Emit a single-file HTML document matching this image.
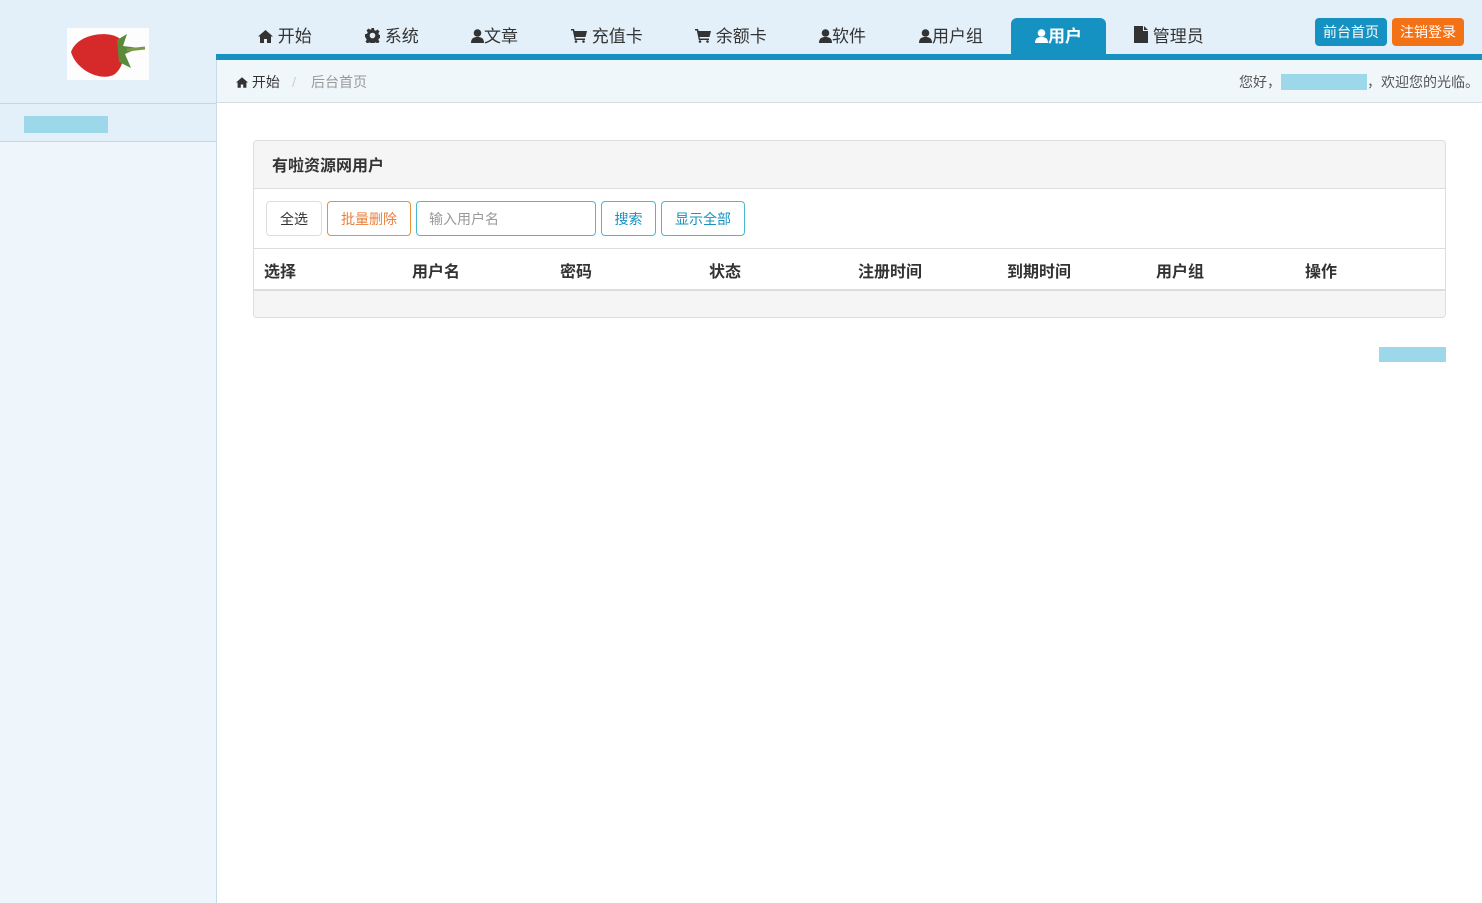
<!DOCTYPE html>
<html><head><meta charset="utf-8"><style>
*{margin:0;padding:0;box-sizing:border-box}
body{width:1482px;height:903px;background:#fff;font-family:"Liberation Sans","Noto Sans CJK SC",sans-serif;position:relative;overflow:hidden;color:#333}
.top{position:absolute;left:0;top:0;width:1482px;height:60px;background:#e3f0fa}
.side{position:absolute;left:0;top:60px;width:217px;height:843px;background:#eef6fb;border-right:1px solid #c9dbe6}
.sidehead{position:absolute;left:0;top:60px;width:216px;height:43px;background:#e3f0fa}
.sideitem{position:absolute;left:0;top:103px;width:216px;height:39px;background:#e3f0fa;border-top:1px solid #c5d6e0;border-bottom:1px solid #c5d6e0}
.blk{position:absolute;background:#9dd8ea}
.bar{position:absolute;left:216px;top:54px;width:1266px;height:6px;background:#1592c2}
.crumb{position:absolute;left:217px;top:60px;width:1265px;height:43px;background:#f0f7fb;border-bottom:1px solid #d3dde3;font-size:14px;line-height:43px}
.nav{position:absolute;top:18px;height:36px;line-height:38px;font-size:17px;color:#333;white-space:nowrap}
.act{background:#1592c2;color:#fff;border-radius:6px 6px 0 0;font-weight:bold;text-align:center}
.btn{position:absolute;top:18px;height:28px;width:72px;border-radius:4px;color:#fff;font-size:14px;line-height:28px;text-align:center}
.panel{position:absolute;left:253px;top:140px;width:1193px;height:178px;border:1px solid #ddd;border-radius:4px;overflow:hidden}
.ph{height:48px;background:#f5f5f5;border-bottom:1px solid #ddd;font-weight:bold;font-size:16px;line-height:52px;padding-left:18px}
.b{position:absolute;top:60px;height:35px;border:1px solid;border-radius:4px;font-size:14px;line-height:35px;text-align:center}
.th{position:absolute;top:107px;left:0;width:100%;height:43px;border-top:1px solid #ddd;border-bottom:2px solid #ddd;font-weight:bold;font-size:16px}
.th span{position:absolute;top:10px}
.empty{position:absolute;top:150px;left:0;width:100%;height:27px;background:#f5f5f5}
svg.i{vertical-align:-1px;fill:currentColor}
</style></head><body>
<div class="top"></div>
<div class="side"></div>
<div class="sidehead"></div>
<div class="sideitem"><div class="blk" style="left:24px;top:12px;width:84px;height:17px"></div></div>
<svg style="position:absolute;left:67px;top:28px" width="82" height="52" viewBox="0 0 82 52"><rect width="82" height="52" fill="#fdfdfd"/><path d="M4 24 C10 6 40 2 52 10 C60 18 58 38 48 46 C36 54 10 44 4 24Z" fill="#d62a2a"/><path d="M50 12 L60 6 L56 18 L72 20 L58 26 L64 40 L52 34Z" fill="#5a8a3a"/><path d="M60 22 L78 20" stroke="#7a9a4a" stroke-width="3"/></svg>
<div class="bar"></div>
<div class="nav" style="left:258px"><svg class="i" width="15" height="13" viewBox="0 0 15 13"><path d="M7.5 0 L15 6.5 L13 6.5 L13 13 L9 13 L9 9 L6 9 L6 13 L2 13 L2 6.5 L0 6.5Z"/></svg> 开始</div>
<div class="nav" style="left:365px"><svg class="i" width="15" height="15" viewBox="0 0 16 16"><path d="M6.5 0h3l.4 2.2 1.6.7 1.9-1.3 2.1 2.1-1.3 1.9.7 1.6 2.1.4v3l-2.1.4-.7 1.6 1.3 1.9-2.1 2.1-1.9-1.3-1.6.7-.4 2.1h-3l-.4-2.1-1.6-.7-1.9 1.3-2.1-2.1 1.3-1.9-.7-1.6L0 9.5v-3l2.2-.4.7-1.6-1.3-1.9 2.1-2.1 1.9 1.3 1.6-.7zM8 5a3 3 0 100 6 3 3 0 000-6z" fill-rule="evenodd"/></svg> 系统</div>
<div class="nav" style="left:471px"><svg class="i" width="13" height="14" viewBox="0 0 13 14"><circle cx="6.5" cy="4" r="3.8"/><path d="M0 14 C0 9 3 8 6.5 8 C10 8 13 9 13 14Z"/></svg>文章</div>
<div class="nav" style="left:571px"><svg class="i" width="16" height="14" viewBox="0 0 16 14"><path d="M0 0h3l.6 2H16l-1.5 6H4.5l.4 1.5H14V11H3.8L1.8 1.5H0z"/><circle cx="5" cy="12.5" r="1.3"/><circle cx="12.5" cy="12.5" r="1.3"/></svg> 充值卡</div>
<div class="nav" style="left:695px"><svg class="i" width="16" height="14" viewBox="0 0 16 14"><path d="M0 0h3l.6 2H16l-1.5 6H4.5l.4 1.5H14V11H3.8L1.8 1.5H0z"/><circle cx="5" cy="12.5" r="1.3"/><circle cx="12.5" cy="12.5" r="1.3"/></svg> 余额卡</div>
<div class="nav" style="left:819px"><svg class="i" width="13" height="14" viewBox="0 0 13 14"><circle cx="6.5" cy="4" r="3.8"/><path d="M0 14 C0 9 3 8 6.5 8 C10 8 13 9 13 14Z"/></svg>软件</div>
<div class="nav" style="left:919px"><svg class="i" width="13" height="14" viewBox="0 0 13 14"><circle cx="6.5" cy="4" r="3.8"/><path d="M0 14 C0 9 3 8 6.5 8 C10 8 13 9 13 14Z"/></svg>用户组</div>
<div class="nav act" style="left:1011px;width:95px"><svg class="i" width="13" height="14" viewBox="0 0 13 14"><circle cx="6.5" cy="4" r="3.8"/><path d="M0 14 C0 9 3 8 6.5 8 C10 8 13 9 13 14Z"/></svg>用户</div>
<div class="nav" style="left:1134px"><svg class="i" width="14" height="17" viewBox="0 0 14 17"><path d="M0 0h9v5h5v12H0z"/><path d="M10 0l4 4h-4z"/></svg> 管理员</div>
<div class="btn" style="left:1315px;background:#1592c2">前台首页</div>
<div class="btn" style="left:1392px;background:#f47216">注销登录</div>
<div class="crumb"><span style="position:absolute;left:19px;top:1px;color:#333;font-size:14px"><svg class="i" width="12" height="11" viewBox="0 0 15 13"><path d="M7.5 0 L15 6.5 L13 6.5 L13 13 L9 13 L9 9 L6 9 L6 13 L2 13 L2 6.5 L0 6.5Z"/></svg> 开始</span><span style="position:absolute;left:75px;top:1px;color:#ccc">/</span><span style="position:absolute;left:94px;top:1px;color:#999">后台首页</span>
<span style="position:absolute;right:3px;top:1px;color:#555">您好，<span style="display:inline-block;width:86px;height:16px;background:#9dd8ea;vertical-align:-3px"></span>，欢迎您的光临。</span></div>
<div class="panel">
<div class="ph">有啦资源网用户</div>
<div class="b" style="left:12px;width:56px;border-color:#ddd;color:#333">全选</div>
<div class="b" style="left:73px;width:84px;border-color:#e8903c;color:#e8803c">批量删除</div>
<div class="b" style="left:162px;width:180px;border-color:#4bb8d4;color:#999;text-align:left;padding-left:12px">输入用户名</div>
<div class="b" style="left:347px;width:55px;border-color:#4bb8d4;color:#1592c2">搜索</div>
<div class="b" style="left:407px;width:84px;border-color:#4bb8d4;color:#1592c2">显示全部</div>
<div class="th"><span style="left:10px;top:9px">选择</span><span style="left:158px;top:9px">用户名</span><span style="left:306px;top:9px">密码</span><span style="left:455px;top:9px">状态</span><span style="left:604px;top:9px">注册时间</span><span style="left:753px;top:9px">到期时间</span><span style="left:902px;top:9px">用户组</span><span style="left:1051px;top:9px">操作</span></div>
<div class="empty"></div>
</div>
<div class="blk" style="left:1379px;top:347px;width:67px;height:15px"></div>
</body></html>
